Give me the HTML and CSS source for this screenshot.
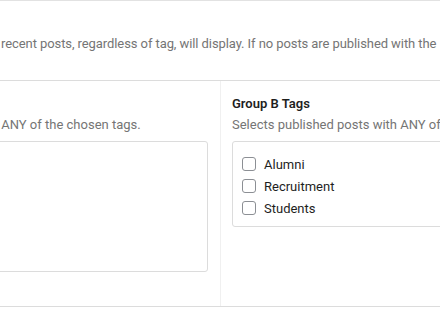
FILE: index.html
```html
<!DOCTYPE html>
<html>
<head>
<meta charset="utf-8">
<link rel="stylesheet" href="styles.css">
</head>
<body>
<div class="page">
  <div class="intro">
    <p class="help">recent posts, regardless of tag, will display. If no posts are published with the</p>
  </div>
  <div class="groups">
    <div class="group group-a">
      <h3 class="group-title">Group A Tags</h3>
      <p class="desc">Selects published posts with ANY of the chosen tags.</p>
      <div class="box box-a"></div>
    </div>
    <div class="group group-b">
      <h3 class="group-title">Group B Tags</h3>
      <p class="desc">Selects published posts with ANY of the chosen tags.</p>
      <div class="box box-b">
        <label class="check"><span class="tick"></span>Alumni</label>
        <label class="check"><span class="tick"></span>Recruitment</label>
        <label class="check"><span class="tick"></span>Students</label>
      </div>
    </div>
  </div>
</div>
</body>
</html>
```
FILE: styles.css
```css
html, body {
  margin: 0;
  padding: 0;
  background: #fff;
  overflow: hidden;
}
body {
  width: 440px;
  height: 320px;
  font-family: Roboto, "Noto Sans", sans-serif;
  font-size: 13px;
  color: #1e1e1e;
}
.page {
  border-top: 1px solid #e2e2e2;
}
.intro {
  height: 80px;
  box-sizing: border-box;
  padding-top: 33px;
  border-bottom: 1px solid #dcdcdc;
}
.help {
  margin: 0 0 0 1px;
  white-space: nowrap;
  color: #757575;
  line-height: 20px;
  letter-spacing: -0.08px;
}
.groups {
  display: grid;
  grid-template-columns: 388px 1fr;
  margin-left: -167px;
  height: 225px;
  border-bottom: 1px solid #dcdcdc;
}
.group {
  padding: 13px 0 0 0;
  min-width: 0;
}
.group-a {
  padding-right: 12px;
  border-right: 1px solid #f0f0f0;
}
.group-b {
  padding-left: 11px;
  overflow: hidden;
}
.group-title {
  margin: 0;
  font-size: 13px;
  font-weight: 600;
  line-height: 20px;
  white-space: nowrap;
}
.desc {
  margin: 1px 0 0;
  line-height: 20px;
  color: #757575;
  white-space: nowrap;
}
.box {
  margin-top: 6px;
  border: 1px solid #dcdcdc;
  border-radius: 3px;
  box-sizing: border-box;
}
.box-a {
  height: 131px;
}
.box-b {
  width: 260px;
  padding: 12px 9px 8px;
  display: flex;
  flex-direction: column;
  gap: 2px;
}
.check {
  display: flex;
  align-items: center;
  gap: 8px;
  height: 20px;
  white-space: nowrap;
}
.tick {
  width: 14px;
  height: 14px;
  border: 1px solid #8c8f94;
  border-radius: 3px;
  box-sizing: border-box;
  flex: none;
}
```
